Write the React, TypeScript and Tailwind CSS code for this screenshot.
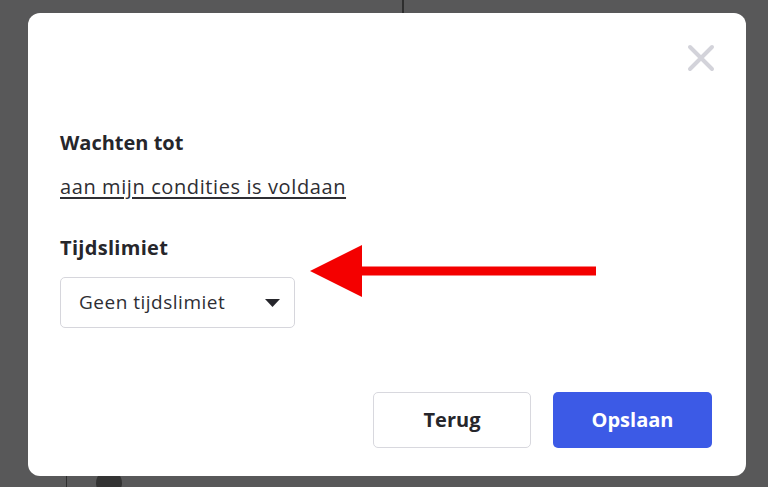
import React from 'react';

function CloseIcon() {
  return (
    <svg width="28" height="28" viewBox="0 0 28 28" fill="none">
      <path d="M3 3L25 25M25 3L3 25" stroke="#d3d3da" strokeWidth="4" strokeLinecap="round" />
    </svg>
  );
}

function RedArrow() {
  return (
    <svg width="288" height="54" viewBox="0 0 288 54" fill="none">
      <polygon points="0,27 52,1 52,53" fill="#f40000" />
      <rect x="50" y="22.5" width="236" height="9" fill="#f40000" />
    </svg>
  );
}

export default function App() {
  return (
    <div
      className="relative h-[487px] w-[768px] overflow-hidden bg-[#585859] px-[28px] pt-[13px]"
      style={{ fontFamily: '"Open Sans", "Liberation Sans", sans-serif' }}
    >
      {/* page behind the dialog */}
      <div className="absolute left-[402px] top-0 h-[13px] w-[2px] bg-[#2e2e2e]" />
      <div className="absolute left-[66px] top-[476px] h-[11px] w-px bg-[#2e2e2e]" />
      <div className="absolute left-[96px] top-[470px] h-[26px] w-[26px] rounded-full bg-[#333]" />

      <div className="relative flex h-[463px] w-[718px] flex-col rounded-[12px] bg-white">
        <div className="mt-[31px] flex justify-end pr-[31px]">
          <button type="button" className="flex h-[28px] w-[28px] items-center justify-center">
            <CloseIcon />
          </button>
        </div>

        <div className="flex flex-col px-[32px]">
          <h2 className="mt-[58px] text-[20px] font-bold leading-[26px] text-[#26262b]">Wachten tot</h2>
          <a
            href="#"
            className="mt-[18px] self-start text-[20px] leading-[26px] tracking-[0.6px] text-[#2e2e33] underline underline-offset-[3px]"
          >
            aan mijn condities is voldaan
          </a>

          <h2 className="mt-[35px] text-[20px] font-bold leading-[26px] tracking-[0.3px] text-[#26262b]">Tijdslimiet</h2>
          <button
            type="button"
            className="mt-[16px] flex h-[51px] w-[235px] items-center justify-between rounded-[5px] border border-[#d6d6dc] pl-[18px] pr-[14px] text-[19px] tracking-[0.5px] text-[#2e2e33]"
          >
            <span>Geen tijdslimiet</span>
            <svg width="15" height="8" viewBox="0 0 15 8">
              <polygon points="0,0 15,0 7.5,8" fill="#26262b" />
            </svg>
          </button>
        </div>

        <div className="absolute left-[282px] top-[231px]">
          <RedArrow />
        </div>

        <div className="mt-[64px] flex justify-end gap-[22px] pr-[34px]">
          <button
            type="button"
            className="h-[56px] w-[158px] rounded-[5px] border border-[#d8d8de] bg-white text-[20px] font-bold text-[#26262b]"
          >
            Terug
          </button>
          <button
            type="button"
            className="h-[56px] w-[159px] rounded-[5px] bg-[#3c5ae6] text-[20px] font-bold text-white"
          >
            Opslaan
          </button>
        </div>
      </div>
    </div>
  );
}
